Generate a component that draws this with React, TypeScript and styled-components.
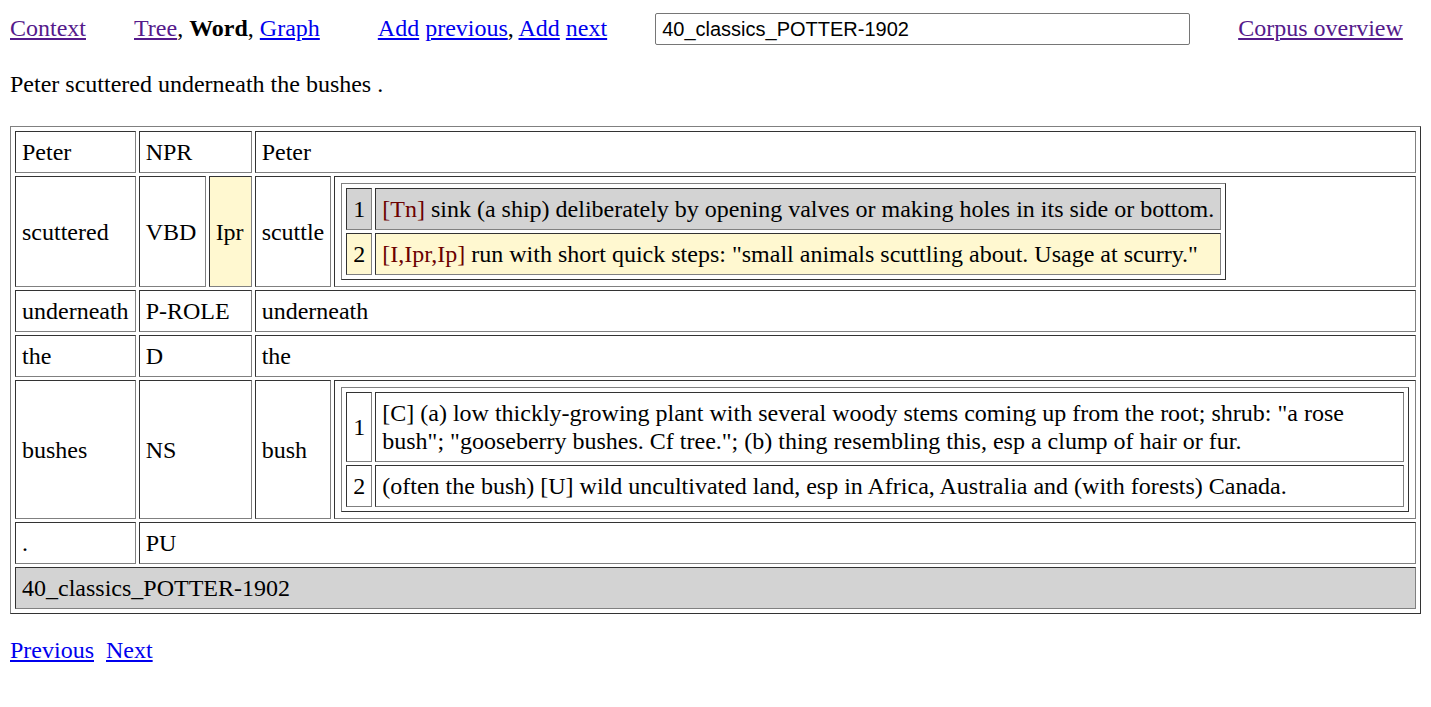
import React from "react";
import styled, { createGlobalStyle } from "styled-components";

const Global = createGlobalStyle`
  html, body { background: #fff; }
  body {
    margin: 10px;
    font-family: "Liberation Serif", "Times New Roman", serif;
    font-size: 24px;
    line-height: 28px;
    color: #000;
  }
`;

const Nav = styled.nav`
  display: flex;
  align-items: flex-start;
  height: 38px;
  white-space: nowrap;
`;

const Group = styled.span<{ $ml?: number }>`
  margin-left: ${(p) => p.$ml || 0}px;
  margin-top: 4px;
`;

const Link = styled.a<{ $visited?: boolean }>`
  color: ${(p) => (p.$visited ? "#551a8b" : "#0000ee")};
  text-decoration: underline;
  cursor: pointer;
`;

const Bold = styled.b`
  font-weight: bold;
`;

const SearchInput = styled.input`
  margin: 3px 0 0 48px;
  box-sizing: border-box;
  width: 535px;
  height: 32px;
  border: 1px solid #767676;
  border-radius: 2px;
  padding: 1px 6px;
  font-family: "Liberation Sans", Arial, sans-serif;
  font-size: 20px;
  color: #000;
  background: #fff;
  outline: none;
`;

const Sentence = styled.p`
  margin: 22px 0 28px 0;
`;

const Table = styled.table<{ $full?: boolean }>`
  border-collapse: separate;
  border-spacing: 3px;
  padding: 1px;
  border: 1px solid;
  border-color: #808080 #333 #333 #808080;
  ${(p) => (p.$full ? "width: 100%;" : "")}
  font-size: 24px;
  line-height: 28px;
`;

const Cell = styled.td<{ $bg?: string; $w?: number }>`
  border: 1px solid;
  border-color: #333 #808080 #808080 #333;
  padding: 6px;
  text-align: left;
  vertical-align: middle;
  background: ${(p) => p.$bg || "transparent"};
  ${(p) => (p.$w ? `width: ${p.$w}px;` : "")}
`;

const Code = styled.span`
  color: #6b0000;
`;

const Pager = styled.div`
  display: flex;
  gap: 12px;
  margin-top: 22px;
`;

const GRAY = "#d3d3d3";
const YELLOW = "#fff8d0";

type Sense = { n: number; code?: string; text: string; bg?: string };

const Senses: React.FC<{ items: Sense[] }> = ({ items }) => (
  <Table>
    <tbody>
      {items.map((s) => (
        <tr key={s.n}>
          <Cell $bg={s.bg}>{s.n}</Cell>
          <Cell $bg={s.bg}>
            {s.code && <Code>{s.code}</Code>}
            {s.text}
          </Cell>
        </tr>
      ))}
    </tbody>
  </Table>
);

export default function App() {
  return (
    <>
      <Global />
      <Nav>
        <Group>
          <Link $visited>Context</Link>
        </Group>
        <Group $ml={48}>
          <Link $visited>Tree</Link>, <Bold>Word</Bold>, <Link>Graph</Link>
        </Group>
        <Group $ml={58}>
          <Link>Add</Link> <Link>previous</Link>, <Link>Add</Link> <Link>next</Link>
        </Group>
        <SearchInput defaultValue="40_classics_POTTER-1902" />
        <Group $ml={48}>
          <Link $visited>Corpus overview</Link>
        </Group>
      </Nav>
      <Sentence>Peter scuttered underneath the bushes .</Sentence>
      <Table $full>
        <tbody>
          <tr>
            <Cell>Peter</Cell>
            <Cell colSpan={2}>NPR</Cell>
            <Cell colSpan={2}>Peter</Cell>
          </tr>
          <tr>
            <Cell>scuttered</Cell>
            <Cell $w={53}>VBD</Cell>
            <Cell $bg={YELLOW} $w={29}>
              Ipr
            </Cell>
            <Cell>scuttle</Cell>
            <Cell>
              <Senses
                items={[
                  {
                    n: 1,
                    code: "[Tn]",
                    bg: GRAY,
                    text: " sink (a ship) deliberately by opening valves or making holes in its side or bottom.",
                  },
                  {
                    n: 2,
                    code: "[I,Ipr,Ip]",
                    bg: YELLOW,
                    text: ' run with short quick steps: "small animals scuttling about. Usage at scurry."',
                  },
                ]}
              />
            </Cell>
          </tr>
          <tr>
            <Cell>underneath</Cell>
            <Cell colSpan={2}>P-ROLE</Cell>
            <Cell colSpan={2}>underneath</Cell>
          </tr>
          <tr>
            <Cell>the</Cell>
            <Cell colSpan={2}>D</Cell>
            <Cell colSpan={2}>the</Cell>
          </tr>
          <tr>
            <Cell>bushes</Cell>
            <Cell colSpan={2}>NS</Cell>
            <Cell>bush</Cell>
            <Cell>
              <Senses
                items={[
                  {
                    n: 1,
                    text: '[C] (a) low thickly-growing plant with several woody stems coming up from the root; shrub: "a rose bush"; "gooseberry bushes. Cf tree."; (b) thing resembling this, esp a clump of hair or fur.',
                  },
                  {
                    n: 2,
                    text: "(often the bush) [U] wild uncultivated land, esp in Africa, Australia and (with forests) Canada.",
                  },
                ]}
              />
            </Cell>
          </tr>
          <tr>
            <Cell>.</Cell>
            <Cell colSpan={4}>PU</Cell>
          </tr>
          <tr>
            <Cell colSpan={5} $bg={GRAY}>
              40_classics_POTTER-1902
            </Cell>
          </tr>
        </tbody>
      </Table>
      <Pager>
        <Link>Previous</Link>
        <Link>Next</Link>
      </Pager>
    </>
  );
}
